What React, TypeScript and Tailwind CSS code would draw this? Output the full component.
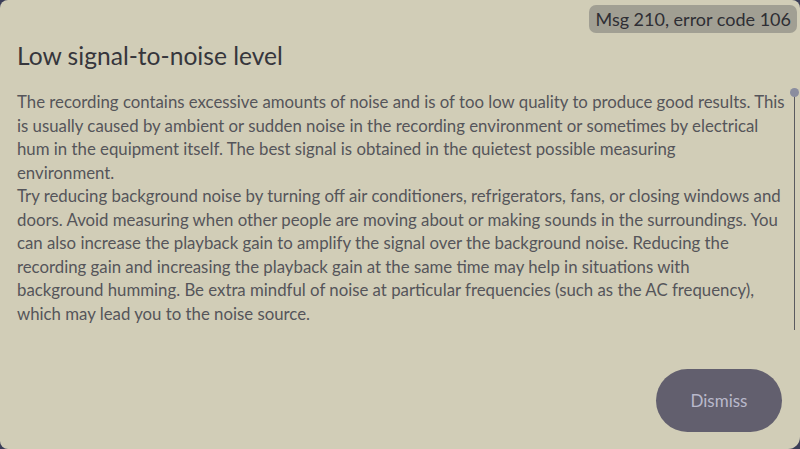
import React from 'react';

// lines broken where the original dialog wraps them
const paragraphs = [
  [
    'The recording contains excessive amounts of noise and is of too low quality to produce good results. This',
    'is usually caused by ambient or sudden noise in the recording environment or sometimes by electrical',
    'hum in the equipment itself. The best signal is obtained in the quietest possible measuring',
    'environment.',
  ],
  [
    'Try reducing background noise by turning off air conditioners, refrigerators, fans, or closing windows and',
    'doors. Avoid measuring when other people are moving about or making sounds in the surroundings. You',
    'can also increase the playback gain to amplify the signal over the background noise. Reducing the',
    'recording gain and increasing the playback gain at the same time may help in situations with',
    'background humming. Be extra mindful of noise at particular frequencies (such as the AC frequency),',
    'which may lead you to the noise source.',
  ],
];

const App: React.FC = () => {
  return (
    <div className="w-[800px] h-[449px] bg-[#3b3e58] overflow-hidden">
      <div
        className="relative w-full h-full bg-[#d1cdb7] rounded-[8px] rounded-br-[12px] flex flex-col"
        style={{ fontFamily: 'Lato, "Open Sans", sans-serif' }}
      >
        <div className="absolute top-[5px] right-[3px] bg-[#a19f93] rounded-[7px] px-[6px] h-[28px] flex items-center text-[18px] text-[#2e2e34]">
          Msg 210, error code 106
        </div>

        <h1 className="pl-[17px] pt-[40px] text-[24.6px] leading-[32px] text-[#36363c]">
          Low signal-to-noise level
        </h1>

        <div className="flex mt-[18px]">
          <div className="flex-1 pl-[17px] text-[16.8px] leading-[23.5px] text-[#55555a]">
            {paragraphs.map((lines, i) => (
              <p key={i}>
                {lines.map((l, j) => (
                  <span key={j} className="block whitespace-nowrap">
                    {l}
                  </span>
                ))}
              </p>
            ))}
          </div>
          <div className="w-[12px] flex flex-col items-center relative">
            <div className="w-[1px] h-[240px] bg-[#5a5a60]" />
            <div className="absolute top-[-2px] w-[9px] h-[9px] rounded-full bg-[#8a8d9f]" />
          </div>
        </div>

        <div className="flex-1" />
        <div className="flex justify-end pr-[18px] pb-[17px]">
          <button className="w-[126px] h-[63px] rounded-full bg-[#625f6e] text-[#b9b9cb] text-[17px]">
            Dismiss
          </button>
        </div>
      </div>
    </div>
  );
};

export default App;
